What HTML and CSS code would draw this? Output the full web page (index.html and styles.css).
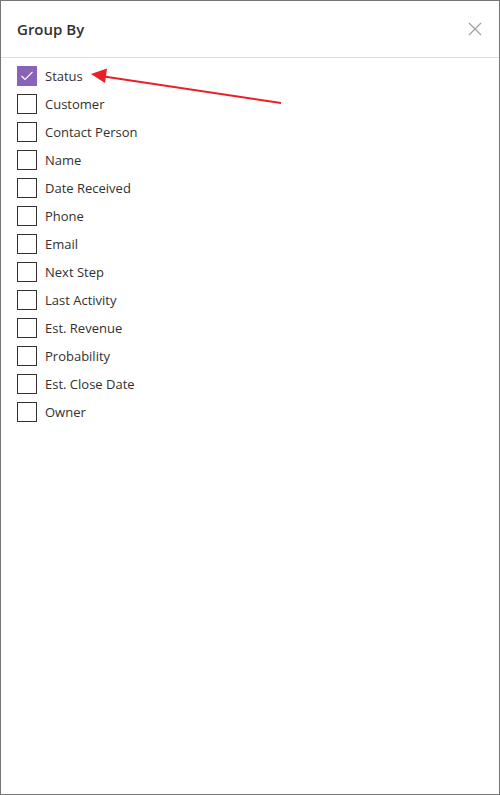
FILE: index.html
```html
<!DOCTYPE html>
<html>
<head>
<meta charset="utf-8">
<link rel="stylesheet" href="styles.css">
</head>
<body>
<div class="panel">
  <div class="header">
    <h1 class="title">Group By</h1>
    <button class="close" aria-label="Close">
      <svg width="14" height="14" viewBox="0 0 14 14"><path d="M1 1 L13 13 M13 1 L1 13" stroke="#a19f9d" stroke-width="1.2" fill="none"/></svg>
    </button>
  </div>
  <ul class="list">
    <li class="item checked"><span class="box"><svg width="14" height="12" viewBox="0 0 14 12"><path d="M1.5 6 L5 9.5 L12.5 2" stroke="#fff" stroke-width="1.1" fill="none"/></svg></span><span class="label">Status</span></li>
    <li class="item"><span class="box"></span><span class="label">Customer</span></li>
    <li class="item"><span class="box"></span><span class="label">Contact Person</span></li>
    <li class="item"><span class="box"></span><span class="label">Name</span></li>
    <li class="item"><span class="box"></span><span class="label">Date Received</span></li>
    <li class="item"><span class="box"></span><span class="label">Phone</span></li>
    <li class="item"><span class="box"></span><span class="label">Email</span></li>
    <li class="item"><span class="box"></span><span class="label">Next Step</span></li>
    <li class="item"><span class="box"></span><span class="label">Last Activity</span></li>
    <li class="item"><span class="box"></span><span class="label">Est. Revenue</span></li>
    <li class="item"><span class="box"></span><span class="label">Probability</span></li>
    <li class="item"><span class="box"></span><span class="label">Est. Close Date</span></li>
    <li class="item"><span class="box"></span><span class="label">Owner</span></li>
  </ul>
  <svg class="arrow" width="500" height="120" viewBox="0 0 500 120">
    <line x1="281" y1="103" x2="104" y2="76.5" stroke="#e8202a" stroke-width="2"/>
    <polygon points="91,74 107,68.5 105,83" fill="#e8202a"/>
  </svg>
</div>
</body>
</html>
```

FILE: styles.css
```css
* { box-sizing: border-box; }
html, body { margin: 0; padding: 0; background: #fff; }
body { font-family: "Open Sans", "Noto Sans", "Liberation Sans", sans-serif; color: #323130; }
.panel {
  position: relative;
  width: 500px;
  height: 795px;
  border: 1px solid #767676;
  background: #fff;
}
.header {
  height: 57px;
  border-bottom: 1px solid #e1dfdd;
  display: flex;
  align-items: center;
  justify-content: space-between;
  padding: 0 17px 0 16px;
}
.title {
  margin: 0;
  font-size: 15px;
  font-weight: 600;
  color: #323130;
  padding-bottom: 1px;
}
.close {
  border: 0;
  background: none;
  padding: 0;
  width: 14px;
  height: 14px;
  display: flex;
  margin-bottom: 1px;
}
.list {
  list-style: none;
  margin: 0;
  padding: 4px 0 0 16px;
}
.item {
  height: 28px;
  display: flex;
  align-items: center;
  gap: 8px;
}
.box {
  width: 20px;
  height: 20px;
  border: 1px solid #323130;
  display: flex;
  align-items: center;
  justify-content: center;
  flex: none;
}
.checked .box {
  background: #8764b8;
  border-color: #8764b8;
}
.label {
  font-size: 13px;
  color: #323130;
}
.arrow {
  position: absolute;
  left: -1px;
  top: -1px;
}
```
